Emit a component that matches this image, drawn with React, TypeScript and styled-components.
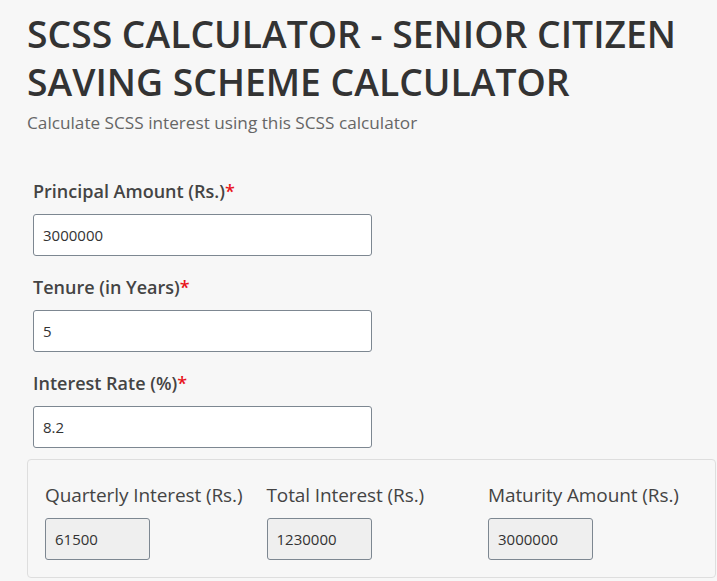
import React from "react";
import styled, { createGlobalStyle } from "styled-components";

const GlobalStyle = createGlobalStyle`
  body {
    margin: 0;
    background: #f7f7f7;
    font-family: "Open Sans", "Noto Sans", sans-serif;
    color: #3a3a3a;
  }
`;

const Page = styled.div`
  padding: 10px 0 0 27px;
`;

const Title = styled.h1`
  margin: 0;
  font-size: 37.3px;
  line-height: 48px;
  font-weight: 600;
  color: #333;
`;

const Subtitle = styled.p`
  margin: 6px 0 0;
  font-size: 17.2px;
  line-height: 22px;
  color: #666;
`;

const Form = styled.div`
  padding: 45px 0 0 6px;
  display: flex;
  flex-direction: column;
  gap: 19px;
`;

const Field = styled.div`
  display: flex;
  flex-direction: column;
`;

const Label = styled.label`
  font-size: 18px;
  line-height: 24px;
  font-weight: 600;
  color: #444;
  margin-bottom: 11px;
`;

const Required = styled.span`
  color: #e8141c;
`;

const Input = styled.div<{ $readOnly?: boolean; $width: number }>`
  box-sizing: border-box;
  width: ${(p) => p.$width}px;
  height: 42px;
  border: 1px solid #7d8791;
  border-radius: 3px;
  background: ${(p) => (p.$readOnly ? "#efefef" : "#fff")};
  font-size: 15px;
  line-height: 40px;
  padding-left: 9px;
  color: #333;
`;

const Results = styled.div`
  box-sizing: border-box;
  margin-top: 11px;
  margin-right: 1px;
  height: 119px;
  border: 1px solid #dedede;
  border-radius: 4px;
  background: #f7f7f7;
  padding: 23px 0 0 17px;
  display: grid;
  grid-template-columns: repeat(3, 221.5px);
`;

const ResultCol = styled.div`
  display: flex;
  flex-direction: column;
`;

const ResultLabel = styled.div`
  font-size: 19px;
  line-height: 24px;
  color: #444;
  font-weight: 400;
  letter-spacing: -0.1px;
  margin-bottom: 11px;
  white-space: nowrap;
`;

const fields = [
  { label: "Principal Amount (Rs.)", value: "3000000" },
  { label: "Tenure (in Years)", value: "5" },
  { label: "Interest Rate (%)", value: "8.2" },
];

const results = [
  { label: "Quarterly Interest (Rs.)", value: "61500" },
  { label: "Total Interest (Rs.)", value: "1230000" },
  { label: "Maturity Amount (Rs.)", value: "3000000" },
];

export default function App() {
  return (
    <Page>
      <GlobalStyle />
      <Title>
        SCSS CALCULATOR - SENIOR CITIZEN
        <br />
        SAVING SCHEME CALCULATOR
      </Title>
      <Subtitle>Calculate SCSS interest using this SCSS calculator</Subtitle>
      <Form>
        {fields.map((f) => (
          <Field key={f.label}>
            <Label>
              {f.label}
              <Required>*</Required>
            </Label>
            <Input $width={339}>{f.value}</Input>
          </Field>
        ))}
      </Form>
      <Results>
        {results.map((r) => (
          <ResultCol key={r.label}>
            <ResultLabel>{r.label}</ResultLabel>
            <Input $readOnly $width={105}>
              {r.value}
            </Input>
          </ResultCol>
        ))}
      </Results>
    </Page>
  );
}
